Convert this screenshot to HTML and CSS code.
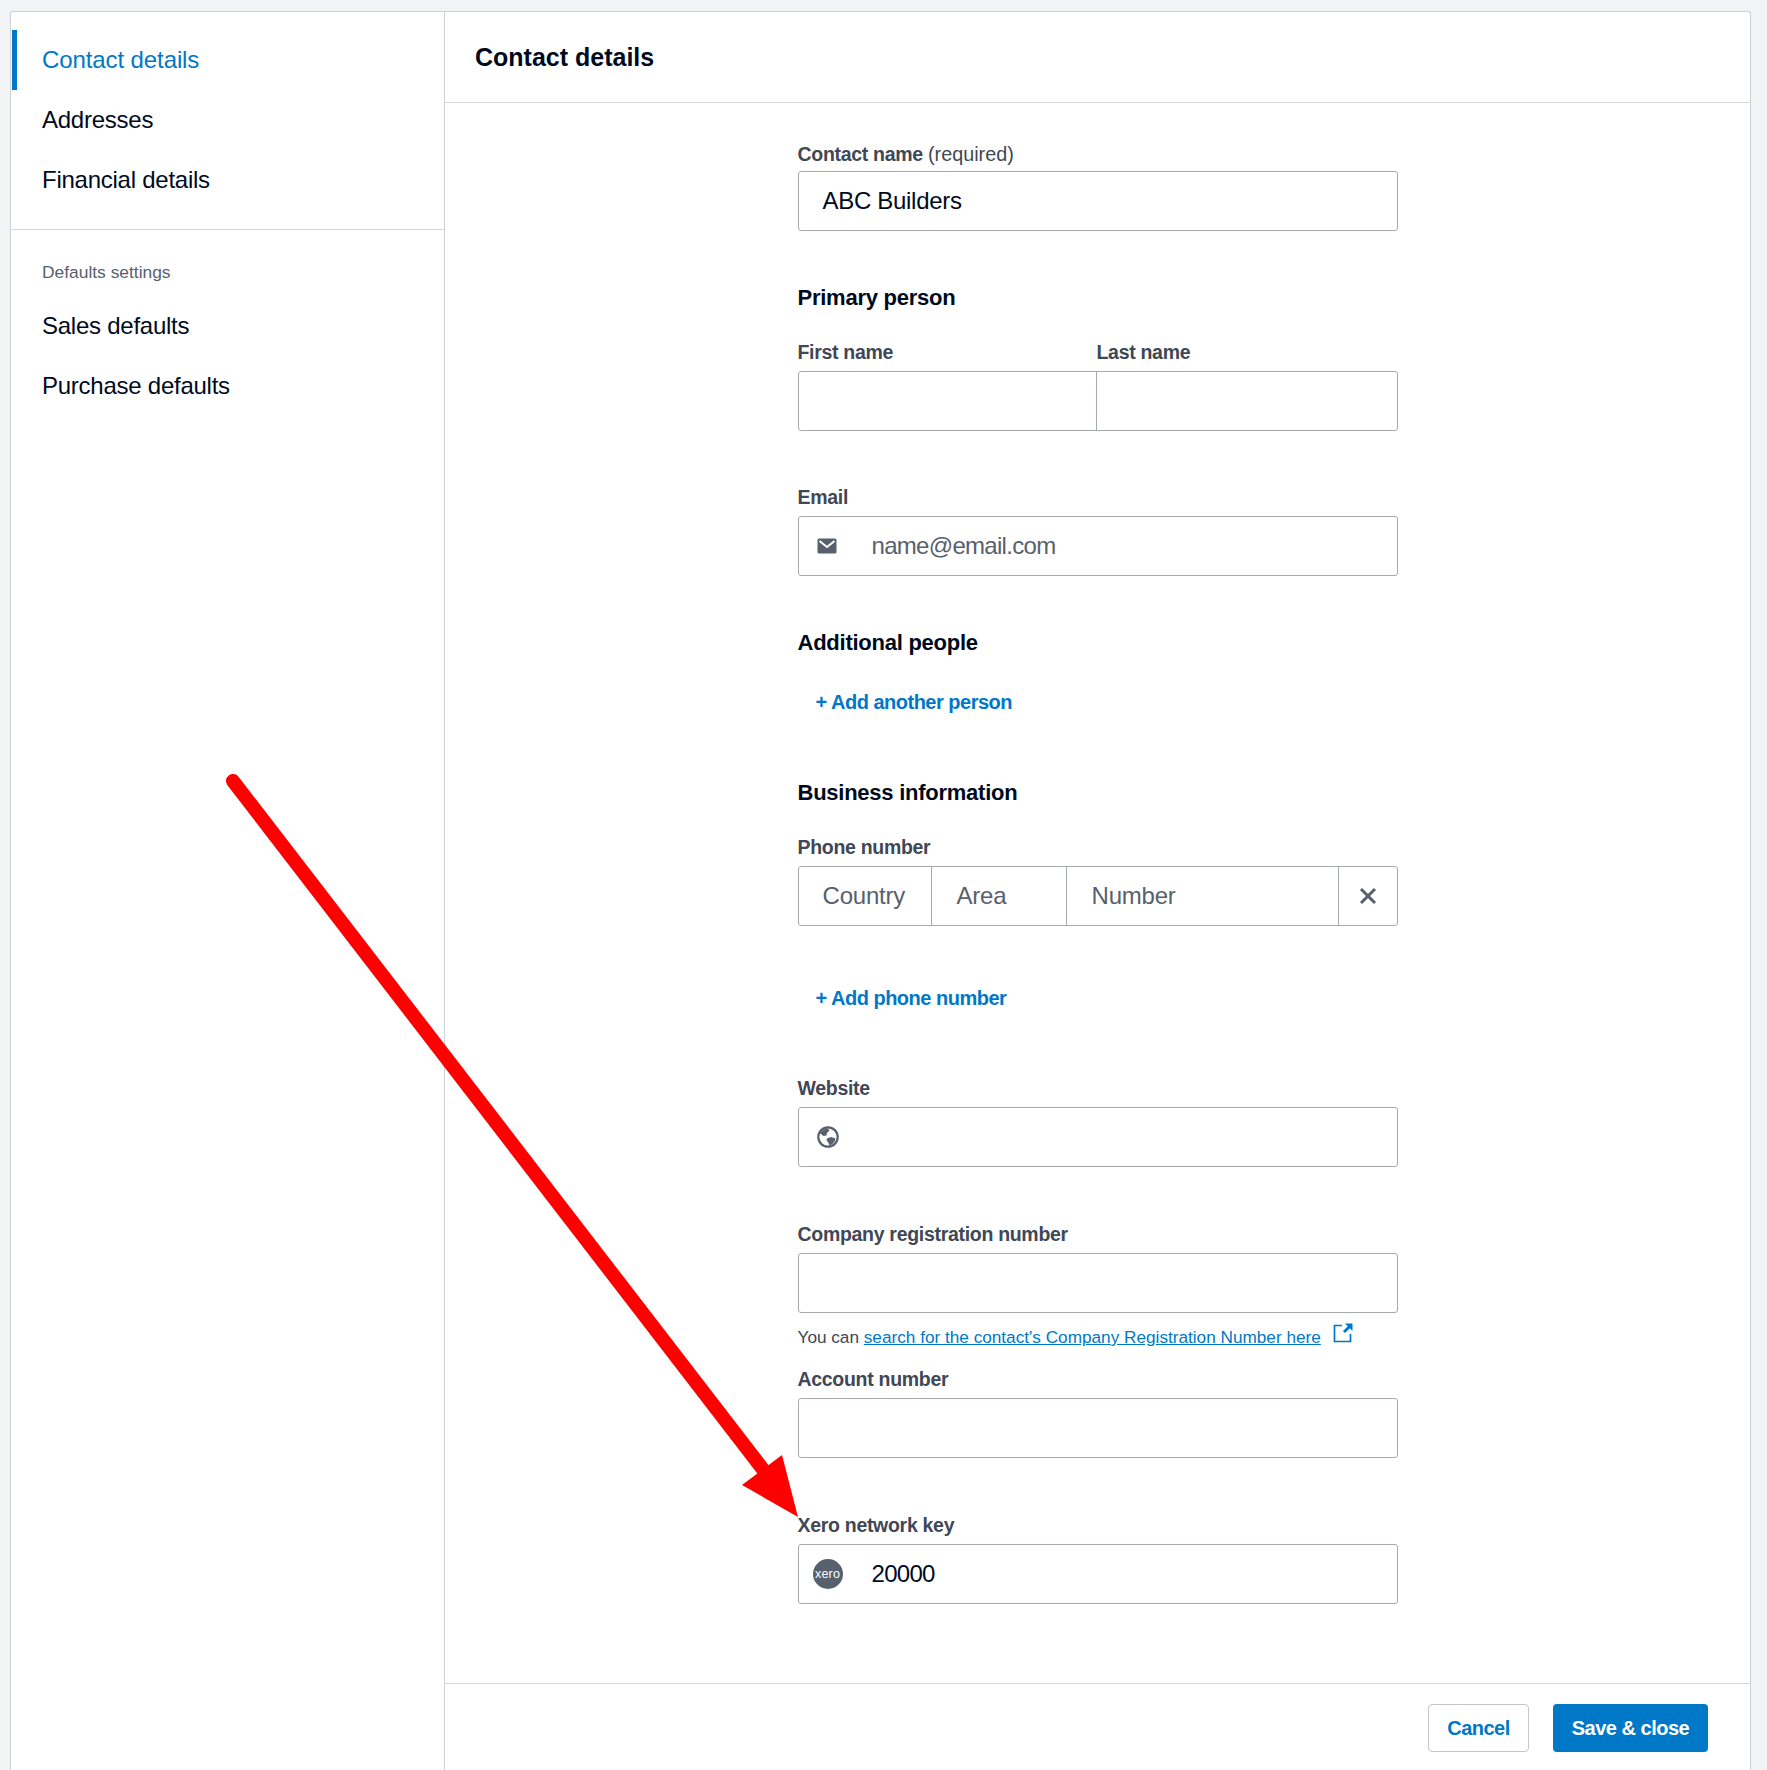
FILE: index.html
```html
<!DOCTYPE html>
<html lang="en">
<head>
<meta charset="utf-8">
<title>Contact details</title>
<link rel="stylesheet" href="styles.css">
</head>
<body>
<div class="card">
  <aside class="sidebar">
    <nav class="nav nav-main">
      <a class="nav-item active">Contact details</a>
      <a class="nav-item">Addresses</a>
      <a class="nav-item">Financial details</a>
    </nav>
    <div class="nav-group">
      <div class="nav-heading">Defaults settings</div>
      <a class="nav-item">Sales defaults</a>
      <a class="nav-item">Purchase defaults</a>
    </div>
  </aside>
  <main class="main">
    <header class="main-header"><h1>Contact details</h1></header>
    <div class="main-body">
      <form class="form">
        <div class="field">
          <div class="label label-tight">Contact name <span class="hint">(required)</span></div>
          <div class="input"><span class="value">ABC Builders</span></div>
        </div>
        <h2 class="section gap-53">Primary person</h2>
        <div class="name-row gap-30">
          <div class="name-col">
            <div class="label">First name</div>
            <div class="input input-left"></div>
          </div>
          <div class="name-col">
            <div class="label">Last name</div>
            <div class="input input-right"></div>
          </div>
        </div>
        <div class="field gap-56">
          <div class="label">Email</div>
          <div class="input">
            <span class="icon">
              <svg width="20" height="16" viewBox="0 0 20 16"><rect x="0.5" y="0.5" width="19" height="15" rx="1.5" fill="#59606d"/><path d="M2.5 3l7.5 6 7.5-6" fill="none" stroke="#fff" stroke-width="2"/></svg>
            </span>
            <span class="placeholder tight">name@email.com</span>
          </div>
        </div>
        <h2 class="section gap-53">Additional people</h2>
        <a class="add-link gap-21">+ Add another person</a>
        <h2 class="section gap-53">Business information</h2>
        <div class="field gap-30">
          <div class="label">Phone number</div>
          <div class="input phone">
            <span class="seg seg-country placeholder">Country</span>
            <span class="seg seg-area placeholder">Area</span>
            <span class="seg seg-number placeholder">Number</span>
            <span class="seg seg-clear">
              <svg width="18" height="18" viewBox="0 0 18 18"><path d="M2 2l14 14M16 2L2 16" fill="none" stroke="#59606d" stroke-width="3"/></svg>
            </span>
          </div>
        </div>
        <a class="add-link gap-48">+ Add phone number</a>
        <div class="field gap-56">
          <div class="label">Website</div>
          <div class="input">
            <span class="icon">
              <svg width="22" height="22" viewBox="0 0 22 22"><circle cx="11" cy="11" r="9.7" fill="#fff" stroke="#59606d" stroke-width="2.2"/><path d="M3 7.5c2-3.5 5-5 8-5l1.5 2-2.5 2.5-.5 2.5-3 .5zM10 12.5l4-1.5 4.5 1.5c-.5 3.500-3 6-6 7l-1.500-3.500-1.500-1.500z" fill="#59606d"/></svg>
            </span>
          </div>
        </div>
        <div class="field gap-57">
          <div class="label">Company registration number</div>
          <div class="input"></div>
          <p class="help">You can <a class="help-link">search for the contact's Company Registration Number here</a><svg class="ext" width="22" height="22" viewBox="0 0 22 22"><path d="M10 3.500H2.500v16h16V12" fill="none" stroke="#0078c8" stroke-width="1.700"/><path d="M13 1.500h7.500V9l-2.700-2.700-4.800 4.800-2-2 4.800-4.800z" fill="#0078c8"/></svg></p>
        </div>
        <div class="field gap-20">
          <div class="label">Account number</div>
          <div class="input"></div>
        </div>
        <div class="field gap-57">
          <div class="label">Xero network key</div>
          <div class="input">
            <span class="icon"><span class="xero">xero</span></span>
            <span class="value tight">20000</span>
          </div>
        </div>
      </form>
    </div>
    <footer class="footer">
      <button class="btn btn-cancel" type="button">Cancel</button>
      <button class="btn btn-save" type="button">Save &amp; close</button>
    </footer>
  </main>
</div>
<svg class="arrow" width="1767" height="1770" viewBox="0 0 1767 1770">
  <path d="M233 781L765 1472" fill="none" stroke="#ff0000" stroke-width="14" stroke-linecap="round"/>
  <path d="M798 1517L782 1455L742 1485z" fill="#ff0000"/>
</svg>
</body>
</html>
```
FILE: styles.css
```css
* { box-sizing: border-box; }
html, body { margin: 0; height: 1770px; overflow: hidden; }
body {
  position: relative;
  background: #f2f3f5;
  padding: 11px 16px 0 10px;
  font-family: "Liberation Sans", Arial, sans-serif;
  color: #000a1e;
}
.card {
  display: flex;
  height: 1759px;
  background: #fff;
  border: 1px solid #cfd1d4;
  border-bottom: 0;
  border-radius: 3px 3px 0 0;
}
.sidebar {
  flex: 0 0 434px;
  border-right: 1px solid #cfd1d4;
}
.nav-main {
  padding: 18px 0 19px;
  border-bottom: 1px solid #d4d6d9;
}
.nav-item {
  display: flex;
  align-items: center;
  height: 60px;
  padding-left: 31px;
  font-size: 24px;
  letter-spacing: -0.25px;
  color: #000a1e;
}
.nav-item.active {
  color: #0078c8;
  margin-left: 1px;
  padding-left: 25px;
  letter-spacing: -0.1px;
  border-left: 5px solid #0078c8;
}
.nav-group { padding-top: 31px; }
.nav-heading {
  height: 22px;
  line-height: 22px;
  padding-left: 31px;
  margin-bottom: 13px;
  font-size: 17.4px;
  color: #59606d;
}
.main {
  flex: 1;
  min-width: 0;
  display: flex;
  flex-direction: column;
}
.main-header {
  height: 91px;
  padding: 29px 30px 0;
  border-bottom: 1px solid #d4d6d9;
}
.main-header h1 {
  margin: 0;
  font-size: 25px;
  line-height: 32px;
  font-weight: 700;
}
.main-body {
  flex: 1;
  display: flex;
  justify-content: center;
  padding-top: 40px;
}
.form { width: 600px; }
.label {
  height: 22px;
  line-height: 20px;
  margin-bottom: 7px;
  font-size: 19.5px;
  letter-spacing: -0.3px;
  font-weight: 700;
  color: #404756;
}
.label-tight { margin-bottom: 6px; line-height: 22px; }
.hint { font-weight: 400; font-size: 19.8px; letter-spacing: 0; }
.input {
  display: flex;
  align-items: center;
  height: 60px;
  padding-left: 24px;
  background: #fff;
  border: 1px solid #a6a9b0;
  border-radius: 3px;
  font-size: 24px;
  letter-spacing: -0.3px;
}
.icon {
  flex: 0 0 55px;
  margin-left: -6px;
  display: flex;
  align-items: center;
}
.value { color: #000a1e; }
.placeholder { color: #59606d; }
.tight { letter-spacing: -0.7px; }
.section {
  margin: 0;
  height: 28px;
  line-height: 28px;
  font-size: 22px;
  letter-spacing: -0.25px;
  font-weight: 700;
  color: #000a1e;
}
.name-row { display: flex; }
.name-col { flex: 1; }
.input-left { border-radius: 3px 0 0 3px; }
.input-right { border-radius: 0 3px 3px 0; margin-left: -1px; width: 302px; }
.add-link {
  display: flex;
  align-items: center;
  height: 48px;
  padding-left: 18px;
  font-size: 20px;
  letter-spacing: -0.5px;
  font-weight: 700;
  color: #0078c8;
}
.phone { padding-left: 0; letter-spacing: -0.2px; }
.seg {
  display: flex;
  align-items: center;
  height: 100%;
  padding-left: 25px;
  border-right: 1px solid #a6a9b0;
}
.seg-country { width: 133px; padding-left: 24px; }
.seg-area { width: 135px; }
.seg-number { width: 272px; }
.seg-clear { flex: 1; padding-left: 0; border-right: 0; justify-content: center; }
.help {
  margin: 14px 0 0;
  height: 22px;
  line-height: 20px;
  font-size: 17.2px;
  color: #404756;
  display: flex;
  align-items: flex-start;
  white-space: pre-wrap;
}
.help-link { color: #0078c8; text-decoration: underline; }
.ext { margin-left: 11px; margin-top: -5px; }
.xero {
  display: flex;
  align-items: center;
  justify-content: center;
  width: 30px;
  height: 30px;
  border-radius: 50%;
  background: #59606d;
  color: #fff;
  font-size: 12.5px;
  letter-spacing: 0.2px;
  margin-left: -4px;
}
.footer {
  height: 87px;
  display: flex;
  justify-content: flex-end;
  align-items: flex-start;
  gap: 24px;
  padding: 20px 42px 0 0;
  border-top: 1px solid #d4d6d9;
}
.btn {
  height: 48px;
  border-radius: 4px;
  font-family: inherit;
  font-size: 20px;
  letter-spacing: -0.5px;
  font-weight: 700;
  padding: 0;
}
.btn-cancel { width: 101px; background: #fff; color: #0078c8; border: 1px solid #c4c6ca; }
.btn-save { width: 155px; background: #0078c8; color: #fff; border: 0; }
.arrow { position: absolute; left: 0; top: 0; pointer-events: none; }
.gap-20 { margin-top: 20px; }
.gap-21 { margin-top: 21px; }
.gap-30 { margin-top: 30px; }
.gap-48 { margin-top: 48px; }
.gap-53 { margin-top: 53px; }
.gap-56 { margin-top: 56px; }
.gap-57 { margin-top: 57px; }
```
